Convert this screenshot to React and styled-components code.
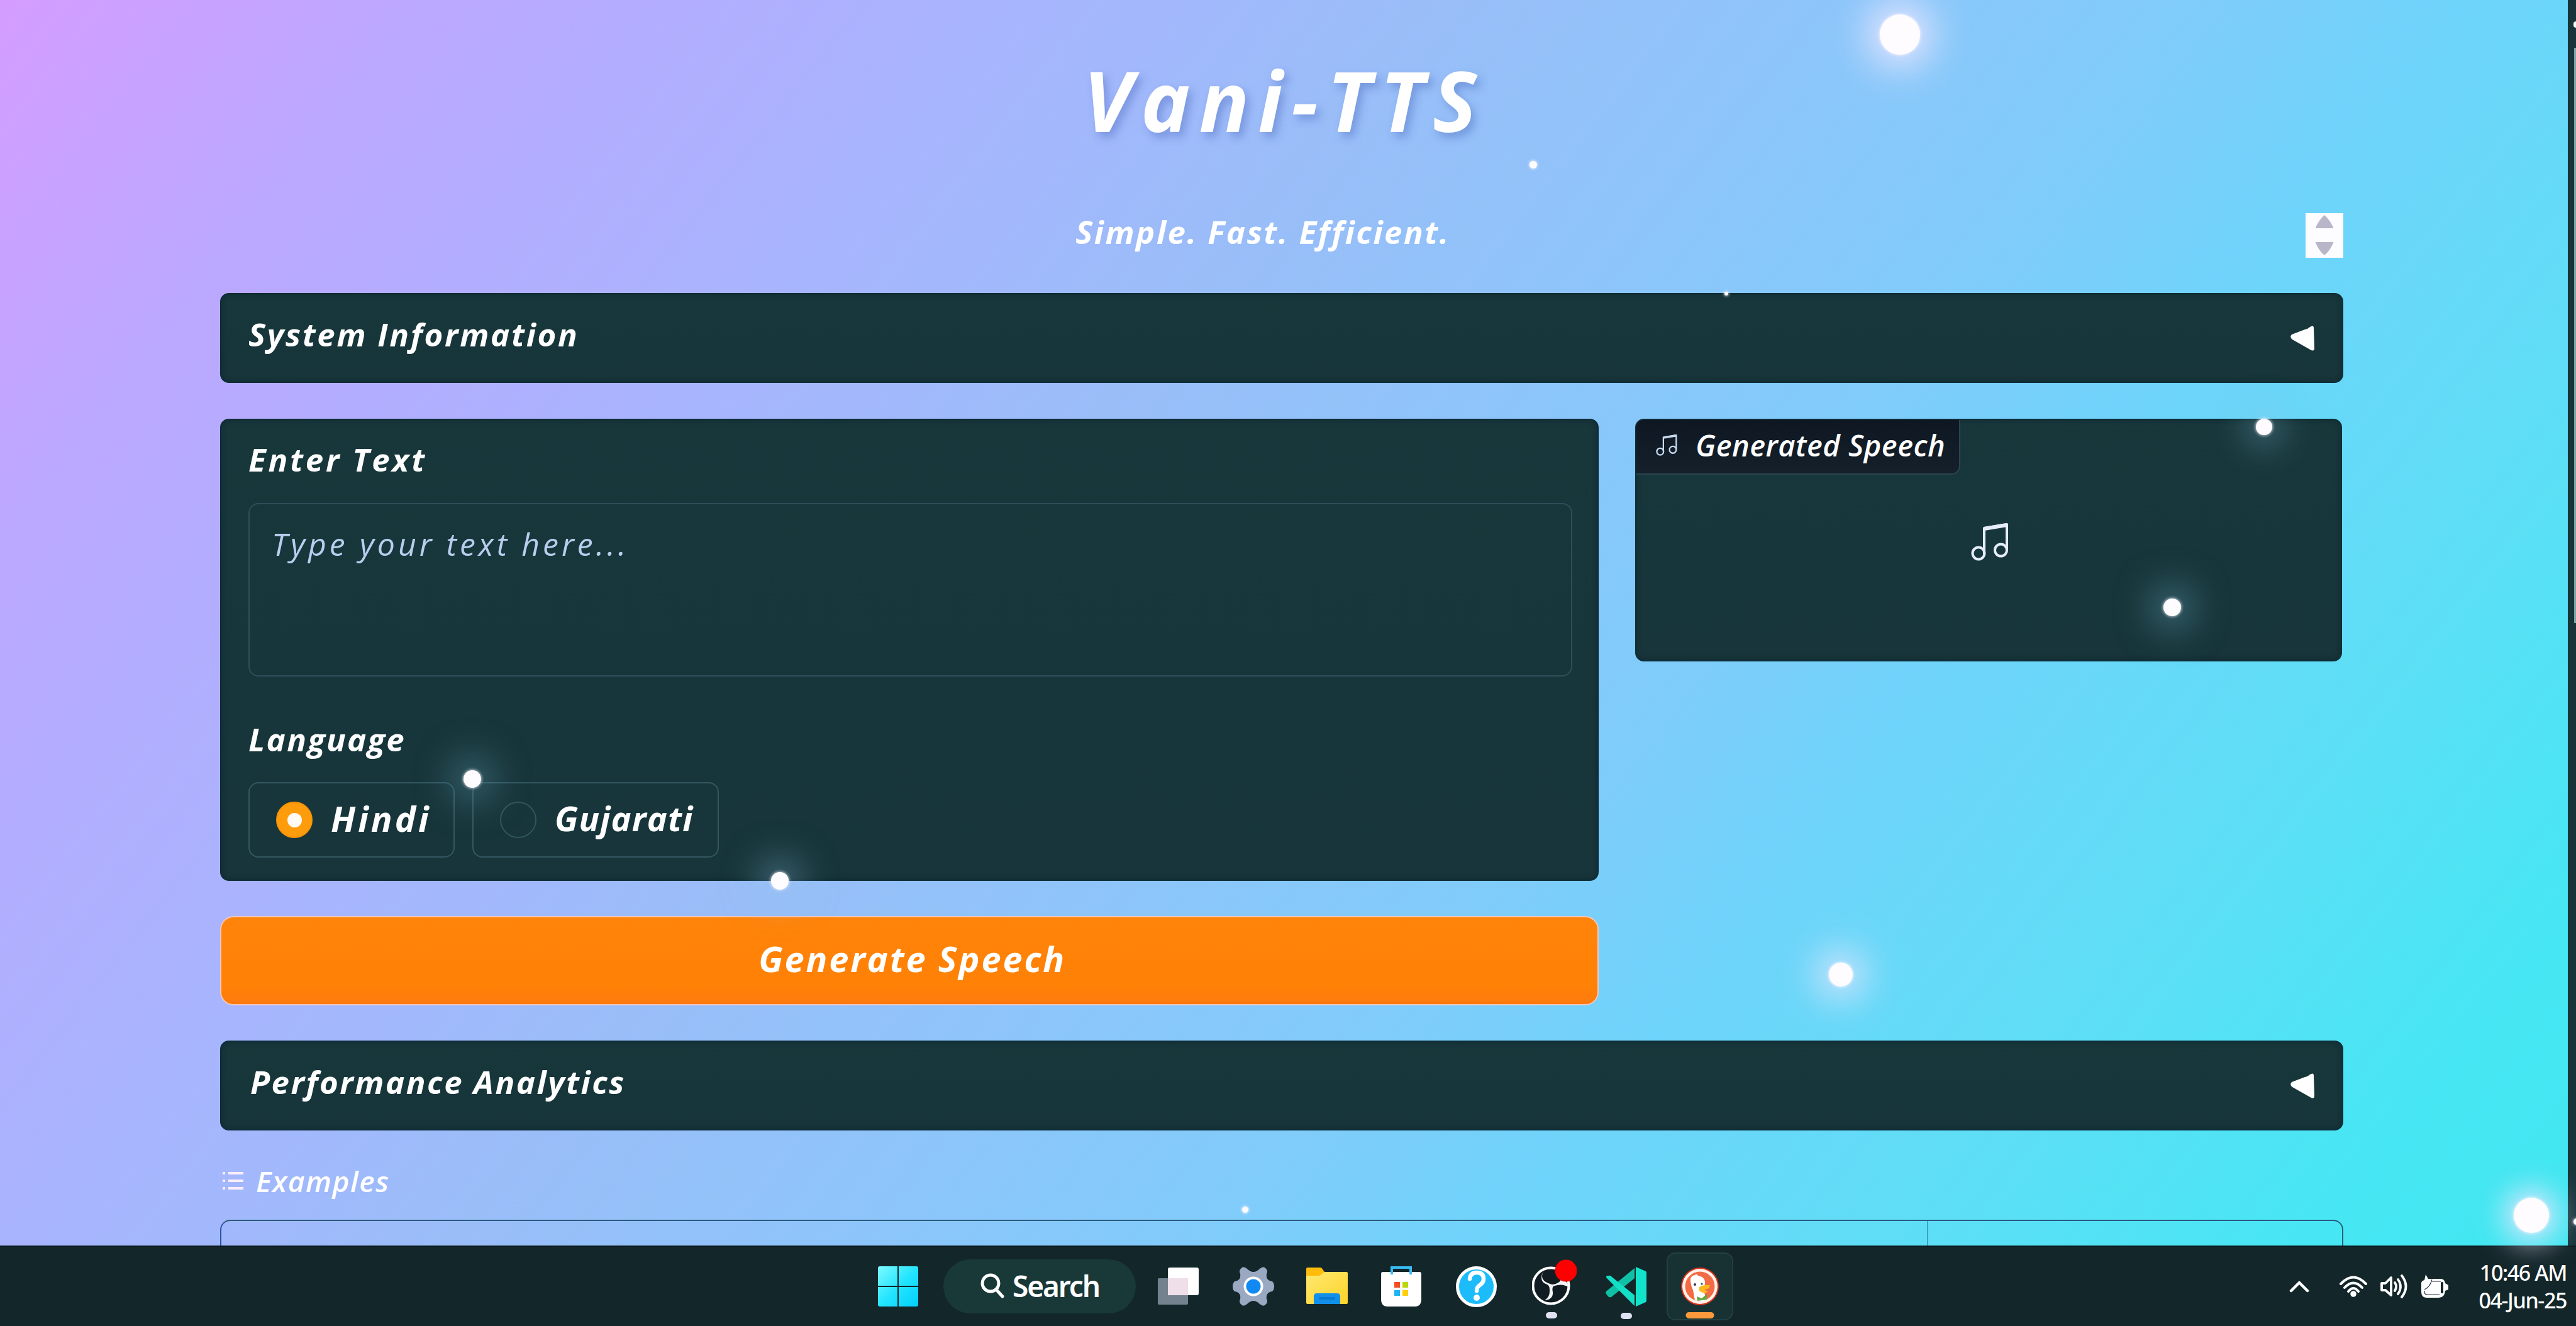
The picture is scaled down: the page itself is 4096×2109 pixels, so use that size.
import React from "react";
import styled, { createGlobalStyle, css } from "styled-components";

const GlobalStyle = createGlobalStyle`
  *, *::before, *::after { box-sizing: border-box; }
  html, body { margin: 0; padding: 0; overflow: hidden; }
  body { font-family: "Open Sans", "Noto Sans", sans-serif; color: #fff; }
`;

const Screen = styled.div`
  position: relative;
  width: 4096px;
  height: 2109px;
  overflow: hidden;
  display: flex;
  flex-direction: column;
`;

const Viewport = styled.div`
  height: 1981px;
  display: flex;
  overflow: hidden;
  background: linear-gradient(
    128deg,
    #d49dff 0%,
    #bba8ff 12%,
    #a7b5fe 29%,
    #9abdf8 40%,
    #8bc6fa 53%,
    #7fccfa 62%,
    #6fd3fa 69%,
    #5edef6 81%,
    #48e6f4 92%,
    #3fe7f0 100%
  );
`;

const Page = styled.main`
  flex: 1;
  display: flex;
  flex-direction: column;
  padding: 79px 357px 0 350px;
`;

const Scrollbar = styled.div`
  width: 15px;
  display: flex;
  flex-direction: column;
  align-items: flex-end;
  background: #17343b;
  padding-top: 34px;
`;
const ScrollArrow = styled.span`
  width: 4px;
  height: 10px;
  border-radius: 5px 0 0 5px;
  background: #fff;
`;
const ScrollThumb = styled.span`
  width: 3px;
  height: 915px;
  margin: 32px 0 946px;
  background: #7fa4a6;
  flex: none;
`;

const Hand = styled.span`
  display: block;
  font-family: "Segoe Script", "Open Sans", "Noto Sans", sans-serif;
  font-style: italic;
  font-weight: ${(p) => p.$weight || 700};
  font-size: ${(p) => p.$size}px;
  letter-spacing: ${(p) => p.$track || 0}px;
  line-height: 60px;
  white-space: nowrap;
  color: ${(p) => p.$color || "#fff"};
`;

const Title = styled(Hand).attrs({ as: "h1" })`
  margin: 0;
  padding-left: 8px;
  line-height: 160px;
  text-align: center;
  text-shadow: 6px 8px 14px rgba(50, 80, 170, 0.34);
`;

const TaglineRow = styled.div`
  display: flex;
  align-items: center;
  margin-top: 100px;
  height: 71px;
  width: 3376px;
`;
const TaglineSlot = styled.div`
  flex: 1;
  display: flex;
  justify-content: center;
  padding-bottom: 13px;
`;
const Stepper = styled.div`
  width: 60px;
  height: 71px;
  background: #fdfcff;
  display: flex;
  flex-direction: column;
  align-items: center;
  justify-content: space-between;
  padding: 2px 0;
`;

const panel = css`
  background: linear-gradient(180deg, #17373b, #17353a);
  border: 2px solid #0e2c38;
  border-radius: 14px;
  box-shadow: inset 0 0 10px rgba(3, 24, 32, 0.35);
`;

const Accordion = styled.section`
  ${panel}
  flex: none;
  height: 143px;
  margin-top: ${(p) => p.$gap}px;
  padding: 0 43px 0 ${(p) => p.$inset}px;
  display: flex;
  align-items: center;
  justify-content: space-between;
  ${Hand} { padding-bottom: 13px; }
`;

const Columns = styled.div`
  display: flex;
  align-items: flex-start;
  gap: 58px;
  margin-top: 57px;
`;
const FormColumn = styled.div`
  width: 2192px;
  display: flex;
  flex-direction: column;
  gap: 56px;
`;
const FormPanel = styled.section`
  ${panel}
  height: 735px;
  padding: 32px 40px 0 43px;
`;
const TextArea = styled.div`
  height: 276px;
  margin: 40px 0 69px;
  padding: 33px 35px;
  border: 2px solid #2f4f58;
  border-radius: 16px;
`;
const RadioGroup = styled.div`
  display: flex;
  gap: 28px;
  margin-top: 39px;
`;
const RadioOption = styled.label`
  display: flex;
  align-items: center;
  width: ${(p) => p.$width}px;
  height: 120px;
  padding-left: 42px;
  border: 2px solid #345762;
  border-radius: 16px;
  ${Hand} { padding-bottom: 6px; }
`;
const RadioDot = styled.span`
  display: grid;
  place-items: center;
  width: 58px;
  height: 58px;
  margin-right: 29px;
  border-radius: 50%;
  background: ${(p) => (p.$on ? "#ff9c0b" : "transparent")};
  border: 2px solid ${(p) => (p.$on ? "#f59208" : "#31545f")};
  &::after {
    content: "";
    width: 23px;
    height: 23px;
    border-radius: 50%;
    background: ${(p) => (p.$on ? "#fffaf5" : "transparent")};
  }
`;
const GenerateButton = styled.button`
  height: 142px;
  padding: 0 0 8px 9px;
  border: 2px solid #f3c6bd;
  border-radius: 21px;
  background: linear-gradient(180deg, #ff8409, #ff8106 80%, #ff7a10);
  display: flex;
  align-items: center;
  justify-content: center;
`;

const AudioPanel = styled.section`
  ${panel}
  width: 1124px;
  height: 386px;
  display: flex;
  flex-direction: column;
  overflow: hidden;
`;
const AudioLabel = styled.header`
  display: flex;
  align-items: center;
  width: 515px;
  height: 87px;
  padding: 0 0 5px 31px;
  gap: 29px;
  background: linear-gradient(180deg, #0e1722, #15202a);
  border-right: 2px solid #2b454e;
  border-bottom: 2px solid #2b454e;
  border-bottom-right-radius: 14px;
`;
const AudioEmpty = styled.div`
  display: flex;
  justify-content: center;
  padding: 77px 0 0 3px;
`;

const ExamplesLabel = styled.div`
  display: flex;
  align-items: center;
  gap: 20px;
  margin: 50px 0 32px;
  padding-left: 4px;
`;
const ExamplesTable = styled.div`
  flex: none;
  display: flex;
  height: 120px;
  border: 2px solid;
  border-color: #2a5a80 #24616f #24616f #2856a5;
  border-radius: 16px;
`;
const ExampleCell = styled.div`
  width: 2714px;
  border-right: 2px solid #3f9fc2;
`;

const Taskbar = styled.footer`
  position: relative;
  height: 128px;
  display: flex;
  align-items: center;
  padding: 0 15px 0 1396px;
  background: #13262a;
  border-top: 2px solid #0a1a1e;
`;
const TaskItem = styled.div`
  position: relative;
  display: flex;
  flex: none;
  margin-left: ${(p) => p.$gap || 0}px;
`;
const TaskIconLift = styled.div`
  display: flex;
  margin: -6px 0 6px;
`;
const SearchPill = styled.div`
  display: flex;
  align-items: center;
  width: 306px;
  height: 86px;
  margin-left: 40px;
  padding: 0 0 2px 59px;
  gap: 13px;
  border-radius: 43px;
  background: #193838;
  font: 600 46px/60px "Noto Sans", sans-serif;
  letter-spacing: -2.1px;
`;
const ActiveTile = styled.div`
  display: flex;
  align-items: center;
  justify-content: center;
  width: 106px;
  height: 108px;
  margin-left: 32px;
  position: relative;
  border: 2px solid #21403f;
  border-radius: 14px;
  background: #183234;
`;
const Indicator = styled.i`
  position: absolute;
  left: 50%;
  bottom: ${(p) => p.$bottom}px;
  width: ${(p) => p.$width}px;
  height: 10px;
  transform: translateX(${(p) => p.$shift || "-50%"});
  border-radius: 5px;
  background: ${(p) => p.$color || "#dfe2f3"};
`;
const Tray = styled.div`
  display: flex;
  align-items: center;
  margin-left: auto;
`;
const Clock = styled.div`
  width: 188px;
  text-align: right;
  font: 500 34px/44px "Noto Sans", sans-serif;
  letter-spacing: -1.4px;
  white-space: nowrap;
`;

const StarLayer = styled.div`
  position: absolute;
  inset: 0;
  pointer-events: none;
`;
const Star = styled.i`
  position: absolute;
  left: ${(p) => p.$x - p.$r}px;
  top: ${(p) => p.$y - p.$r}px;
  width: ${(p) => p.$r * 2}px;
  height: ${(p) => p.$r * 2}px;
  border-radius: 50%;
  background: #fffcff;
  box-shadow: 0 0 4px 1px rgba(255, 250, 255, 0.7)
    ${(p) =>
      p.$glow &&
      css`, 0 0 ${p.$glow}px ${p.$glow / 3.5}px rgba(${p.$tint || "240,232,255"}, ${p.$alpha || 0.6})`};
`;

const stars = [
  { x: 3021, y: 55, r: 32, glow: 64, alpha: 1 },
  { x: 2438, y: 262, r: 6 },
  { x: 2745, y: 467, r: 3 },
  { x: 3600, y: 679, r: 13, glow: 55, tint: "140,195,225", alpha: 0.45 },
  { x: 3454, y: 966, r: 14, glow: 60, tint: "110,170,195", alpha: 0.6 },
  { x: 751, y: 1239, r: 14, glow: 60, tint: "110,170,195", alpha: 0.55 },
  { x: 1240, y: 1401, r: 14, glow: 60, tint: "150,200,235", alpha: 0.5 },
  { x: 2927, y: 1550, r: 19, glow: 62, alpha: 0.95 },
  { x: 4025, y: 1933, r: 28, glow: 48, alpha: 0.9 },
  { x: 1980, y: 1924, r: 5 },
  { x: 4097, y: 1943, r: 5 },
];

const Caret = () => (
  <svg width="40" height="42" viewBox="0 0 40 42">
    <path d="M3 15 Q-1 19 4 23 L34 40 Q39 42 39 37 L38 5 Q38-1 32 3 Q29 6 24 7Z" fill="#fff" />
  </svg>
);

const MusicIcon = ({ size, stroke, color }) => (
  <svg width={size} height={size} viewBox="0 0 60 60" fill="none" stroke={color} strokeWidth={stroke}>
    <path d="M21 49V8L57 2V43" strokeLinejoin="round" />
    <path d="M21 9L57 3" strokeWidth={stroke * 1.5} />
    <circle cx="12" cy="48" r="9.5" />
    <circle cx="47.5" cy="43" r="9.5" />
  </svg>
);

const ListIcon = () => (
  <svg width="33" height="30" viewBox="0 0 33 30" stroke="#fbeefa" strokeWidth="4">
    <path d="M0 3H4M9 3H33M0 15H4M9 15H33M0 27H4M9 27H33" />
  </svg>
);

const StartIcon = () => (
  <svg width="64" height="64" viewBox="0 0 64 64">
    <defs>
      <linearGradient id="start" x1="0" y1="0" x2="1" y2="1">
        <stop offset="0" stopColor="#7dfaff" />
        <stop offset="0.5" stopColor="#25e5ff" />
        <stop offset="1" stopColor="#00d0ff" />
      </linearGradient>
    </defs>
    <path fill="url(#start)" d="M3 0H31V31H0V3Q0 0 3 0ZM33 0H61Q64 0 64 3V31H33ZM0 33H31V64H3Q0 64 0 61ZM33 33H64V61Q64 64 61 64H33Z" />
  </svg>
);

const SearchIcon = () => (
  <svg width="38" height="40" viewBox="0 0 38 40" fill="none" stroke="#fff" strokeWidth="5" strokeLinecap="round">
    <circle cx="16" cy="16" r="13" />
    <path d="M25 26L35 37" />
  </svg>
);

const TaskViewIcon = () => (
  <svg width="65" height="60" viewBox="0 0 65 60">
    <rect x="0" y="17" width="48" height="42" rx="2" fill="#74828f" />
    <rect x="16" y="0" width="49" height="44" rx="3" fill="#fff" />
    <rect x="16" y="17" width="32" height="27" fill="#efdfe9" />
  </svg>
);

const GearIcon = () => (
  <svg width="66" height="62" viewBox="0 0 66 62">
    <path
      d="M15 1Q18-1 23 3Q28 8 33 8Q38 8 43 3Q48-1 51 1Q57 5 54 11Q53 17 56 20Q59 23 63 23Q66 26 66 31Q66 36 63 39Q59 39 56 42Q53 45 54 51Q57 57 51 61Q48 63 43 59Q38 54 33 54Q28 54 23 59Q18 63 15 61Q9 57 12 51Q13 45 10 42Q7 39 3 39Q0 36 0 31Q0 26 3 23Q7 23 10 20Q13 17 12 11Q9 5 15 1Z"
      fill="#9ba8c2"
    />
    <circle cx="33" cy="31" r="13.500" fill="#1089f2" stroke="#fff" strokeWidth="4" />
  </svg>
);

const FolderIcon = () => (
  <svg width="66" height="60" viewBox="0 0 66 60">
    <defs>
      <linearGradient id="folder" x1="0" y1="0" x2="1" y2="1">
        <stop offset="0" stopColor="#ffe873" />
        <stop offset="1" stopColor="#fcd428" />
      </linearGradient>
    </defs>
    <path d="M2 0H22Q25 0 26 3L30 8V14H0V2Q0 0 2 0Z" fill="#ffbc0a" />
    <path d="M0 13H21L29 7H64Q66 7 66 9V56Q66 58 64 58H2Q0 58 0 56Z" fill="url(#folder)" />
    <path d="M12 58V46Q12 41 17 41H49Q54 41 54 46V58Z" fill="#1190ea" />
    <rect x="20" y="47" width="26" height="4" rx="2" fill="#0b78d2" />
  </svg>
);

const StoreIcon = () => (
  <svg width="64" height="64" viewBox="0 0 64 64">
    <path d="M3 9H61Q64 9 64 12V52Q64 64 54 64H10Q0 64 0 52V12Q0 9 3 9Z" fill="#fff" />
    <path d="M17 13V2H47V13" fill="none" stroke="#38bdf2" strokeWidth="4" />
    <rect x="21" y="25" width="9" height="9" fill="#f25022" />
    <rect x="34" y="25" width="9" height="9" fill="#b8d80b" />
    <rect x="21" y="38" width="9" height="9" fill="#1db4f2" />
    <rect x="34" y="38" width="9" height="9" fill="#ffcf0d" />
  </svg>
);

const HelpIcon = () => (
  <svg width="65" height="65" viewBox="0 0 65 65">
    <circle cx="32.5" cy="32.5" r="30" fill="#1cbcfa" stroke="#fff" strokeWidth="5" />
    <path d="M22 20Q23 10 33 10Q44 10 44 20Q44 26 38 30Q33 33 33 39" fill="none" stroke="#fff" strokeWidth="6.5" strokeLinecap="round" />
    <circle cx="33" cy="50" r="5" fill="#fff" />
  </svg>
);

const RecorderIcon = () => (
  <svg width="71" height="74" viewBox="0 0 71 74">
    <circle cx="30" cy="42" r="28.5" fill="#101c22" stroke="#fff" strokeWidth="4" />
    <path d="M18 18Q12 32 24 37Q30 40 33 40Q43 39 47 31Q58 36 58 44Q48 38 36 42Q31 43 33 52Q34 64 20 65Q29 60 28 48Q28 42 24 40Q10 36 18 18Z" fill="#f3f4f8" />
    <circle cx="54" cy="18" r="17.5" fill="#ff0000" />
  </svg>
);

const EditorIcon = () => (
  <svg width="65" height="63" viewBox="0 0 65 63">
    <path d="M46 2V18L9 48Q6 49 4 47L1 43Q-1 40 2 38Z" fill="#0fc0a6" />
    <path d="M2 18Q0 16 2 14L5 14Q8 13 10 16L46 45V62Z" fill="#14dfc6" />
    <path d="M48 0L64 7Q65 8 65 10V53Q65 55 64 56L48 63Z" fill="#12e4cb" />
  </svg>
);

const BrowserIcon = () => (
  <svg width="60" height="60" viewBox="0 0 60 60">
    <circle cx="30" cy="30" r="30" fill="#d8331c" />
    <circle cx="30" cy="30" r="28" fill="#fff2ea" />
    <circle cx="30" cy="30" r="23.5" fill="#f26b45" />
    <path d="M15 22Q14 13 22 12Q25 9 27 13Q38 15 38 24L37 39Q38 46 40 52Q30 55 22 52L19 36Q16 30 15 22Z" fill="#fff" />
    <circle cx="22" cy="27" r="2" fill="#2c3850" />
    <circle cx="33" cy="26" r="1.5" fill="#2c3850" />
    <path d="M28 32Q34 27 46 28L45 32Q43 35 36 35Q41 37 43 39Q34 42 29 37Z" fill="#fbb91d" />
    <path d="M25 46L33 49L41 42V51L33 52L26 53Z" fill="#65a83d" />
  </svg>
);

const ChevronIcon = () => (
  <svg width="32" height="20" viewBox="0 0 32 20" fill="none" stroke="#fff" strokeWidth="4.5" strokeLinecap="round" strokeLinejoin="round">
    <path d="M3 17L16 4L29 17" />
  </svg>
);

const WifiIcon = () => (
  <svg width="44" height="34" viewBox="0 0 44 34" fill="none" stroke="#fff" strokeWidth="4" strokeLinecap="round">
    <path d="M2 13Q22-8 42 13M8 19Q22 4 36 19M14 25Q22 15 30 25" />
    <circle cx="22" cy="29" r="2.8" fill="#fff" />
  </svg>
);

const SpeakerIcon = () => (
  <svg width="44" height="38" viewBox="0 0 44 38" fill="none" stroke="#fff" strokeWidth="3.8" strokeLinecap="round" strokeLinejoin="round">
    <path d="M2 14H8L17 5V33L8 25H2Z" />
    <path d="M23 13Q27 19 23 26M28 8Q36 19 28 31M34 2Q47 19 34 36" />
  </svg>
);

const BatteryIcon = () => (
  <svg width="43" height="38" viewBox="0 0 43 38">
    <path d="M5 9L7 0L11 7H31Q37 7 38 14L43 17V24L38 26Q37 37 28 37H9Q0 37 0 28V14Q0 10 5 9Z" fill="#fff" />
    <path d="M17 8Q14 20 5 24M17 11H31M5 26V29Q6 32 10 32H29" fill="none" stroke="#25344a" strokeWidth="1.2" />
    <rect x="31" y="12" width="4" height="18" rx="1.5" fill="#13262a" />
  </svg>
);

export default function App() {
  return (
    <>
      <GlobalStyle />
      <Screen>
        <Viewport>
          <Page>
            <Title $size={132} $track={14}>Vani-TTS</Title>
            <TaglineRow>
              <TaglineSlot>
                <Hand $size={51} $track={2.5}>Simple. Fast. Efficient.</Hand>
              </TaglineSlot>
              <Stepper>
                <svg width="30" height="24" viewBox="0 0 30 24"><path d="M15 1Q24 9 29.500 22H.5Q6 9 15 1Z" fill="#b8b6c8" /></svg>
                <svg width="30" height="24" viewBox="0 0 30 24"><path d="M15 22Q24 15 29.500 1H.5Q6 15 15 22Z" fill="#b8b6c8" /></svg>
              </Stepper>
            </TaglineRow>

            <Accordion $gap={56} $inset={43}>
              <Hand $size={51} $track={2.7}>System Information</Hand>
              <Caret />
            </Accordion>

            <Columns>
              <FormColumn>
                <FormPanel>
                  <Hand $size={51} $track={3.8}>Enter Text</Hand>
                  <TextArea>
                    <Hand $size={50} $track={5} $weight={400} $color="#b9cdee">Type your text here...</Hand>
                  </TextArea>
                  <Hand $size={51} $track={2.2}>Language</Hand>
                  <RadioGroup>
                    <RadioOption $width={328}>
                      <RadioDot $on />
                      <Hand $size={56} $track={4}>Hindi</Hand>
                    </RadioOption>
                    <RadioOption $width={392}>
                      <RadioDot />
                      <Hand $size={54} $track={1.2}>Gujarati</Hand>
                    </RadioOption>
                  </RadioGroup>
                </FormPanel>
                <GenerateButton>
                  <Hand $size={56} $track={2.8}>Generate Speech</Hand>
                </GenerateButton>
              </FormColumn>

              <AudioPanel>
                <AudioLabel>
                  <MusicIcon size={34} stroke={4} color="#c8daf0" />
                  <Hand $size={47} $track={0.5} $weight={600}>Generated Speech</Hand>
                </AudioLabel>
                <AudioEmpty>
                  <MusicIcon size={60} stroke={4} color="#e6ecfa" />
                </AudioEmpty>
              </AudioPanel>
            </Columns>

            <Accordion $gap={56} $inset={46}>
              <Hand $size={51} $track={2.5}>Performance Analytics</Hand>
              <Caret />
            </Accordion>

            <ExamplesLabel>
              <ListIcon />
              <Hand $size={46} $track={1.6} $weight={600}>Examples</Hand>
            </ExamplesLabel>
            <ExamplesTable>
              <ExampleCell />
            </ExamplesTable>
          </Page>
          <Scrollbar>
            <ScrollArrow />
            <ScrollThumb />
          </Scrollbar>
        </Viewport>

        <Taskbar>
          <TaskItem><StartIcon /></TaskItem>
          <SearchPill>
            <SearchIcon />
            Search
          </SearchPill>
          <TaskItem $gap={35}><TaskViewIcon /></TaskItem>
          <TaskItem $gap={54}><GearIcon /></TaskItem>
          <TaskItem $gap={51}><FolderIcon /></TaskItem>
          <TaskItem $gap={53}><StoreIcon /></TaskItem>
          <TaskItem $gap={55}><HelpIcon /></TaskItem>
          <TaskItem $gap={56}>
            <TaskIconLift><RecorderIcon /></TaskIconLift>
            <Indicator $width={18} $bottom={-14} $shift="-14px" />
          </TaskItem>
          <TaskItem $gap={46}>
            <EditorIcon />
            <Indicator $width={18} $bottom={-20} />
          </TaskItem>
          <ActiveTile>
            <BrowserIcon />
            <Indicator $width={45} $bottom={1} $color="#fb9a3c" />
          </ActiveTile>
          <Tray>
            <TaskItem><ChevronIcon /></TaskItem>
            <TaskItem $gap={48}><WifiIcon /></TaskItem>
            <TaskItem $gap={21}><SpeakerIcon /></TaskItem>
            <TaskItem $gap={21}><BatteryIcon /></TaskItem>
            <Clock>
              10:46 AM
              <br />
              04-Jun-25
            </Clock>
          </Tray>
        </Taskbar>

        <StarLayer>
          {stars.map((s) => (
            <Star key={`${s.x}-${s.y}`} $x={s.x} $y={s.y} $r={s.r} $glow={s.glow} $tint={s.tint} $alpha={s.alpha} />
          ))}
        </StarLayer>
      </Screen>
    </>
  );
}
